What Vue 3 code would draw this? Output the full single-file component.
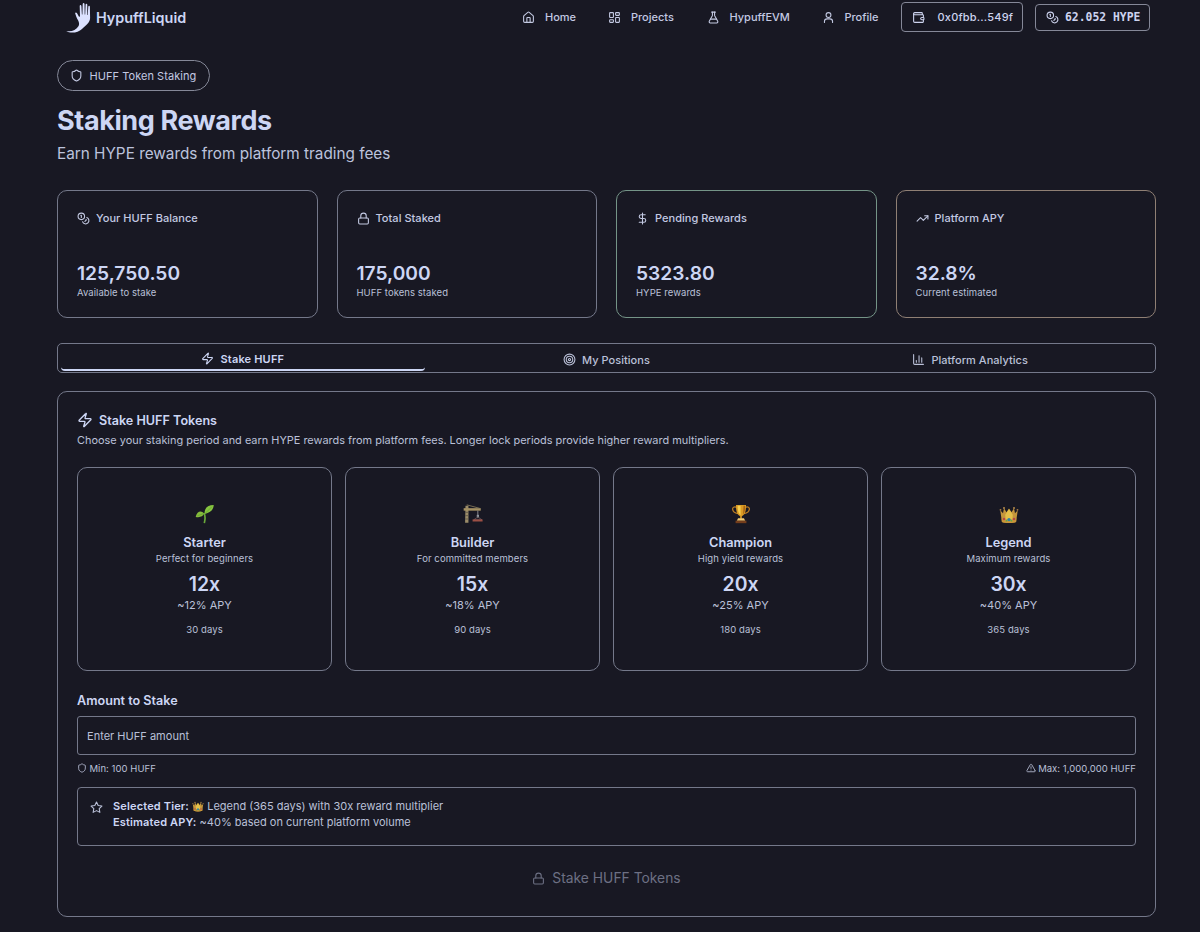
<script setup>
const icons = {
  home: '<path d="M15 21v-8a1 1 0 0 0-1-1h-4a1 1 0 0 0-1 1v8"/><path d="M3 10a2 2 0 0 1 .7-1.5l7-6a2 2 0 0 1 2.6 0l7 6A2 2 0 0 1 21 10v9a2 2 0 0 1-2 2H5a2 2 0 0 1-2-2z"/>',
  grid: '<rect width="7" height="9" x="3" y="3" rx="1"/><rect width="7" height="5" x="14" y="3" rx="1"/><rect width="7" height="9" x="14" y="12" rx="1"/><rect width="7" height="5" x="3" y="16" rx="1"/>',
  flask: '<path d="M14 2v6a2 2 0 0 0 .2.9l5.6 10.2A2 2 0 0 1 18 22H6a2 2 0 0 1-1.800-2.900L9.800 8.900A2 2 0 0 0 10 8V2"/><path d="M6.500 15h11"/><path d="M8.500 2h7"/>',
  user: '<circle cx="12" cy="7.500" r="4.500"/><path d="M4.500 21v-1.500a5 5 0 0 1 5-5h5a5 5 0 0 1 5 5V21"/>',
  wallet: '<path d="M19 7V4a1 1 0 0 0-1-1H5a2 2 0 0 0 0 4h15a1 1 0 0 1 1 1v4h-3a2 2 0 0 0 0 4h3a1 1 0 0 0 1-1v-2a1 1 0 0 0-1-1"/><path d="M3 5v14a2 2 0 0 0 2 2h15a1 1 0 0 0 1-1v-4"/>',
  coins: '<circle cx="8" cy="8" r="6"/><path d="M18.090 10.370A6 6 0 1 1 10.340 18"/><path d="M7 6h1v4"/><path d="m16.710 13.880.7.710-2.820 2.820"/>',
  lock: '<rect width="18" height="11" x="3" y="11" rx="2"/><path d="M7 11V7a5 5 0 0 1 10 0v4"/>',
  dollar: '<path d="M12 2v20"/><path d="M17 5H9.500a3.500 3.500 0 0 0 0 7h5a3.500 3.500 0 0 1 0 7H6"/>',
  trend: '<path d="M22 7 13.500 15.500 8.500 10.500 2 17"/><path d="M16 7h6v6"/>',
  zap: '<path d="M4 14a1 1 0 0 1-.78-1.630l9.900-10.200a.5.5 0 0 1 .860.460l-1.920 6.020A1 1 0 0 0 13 10h7a1 1 0 0 1 .780 1.630l-9.900 10.200a.5.5 0 0 1-.860-.460l1.920-6.020A1 1 0 0 0 11 14z"/>',
  target: '<circle cx="12" cy="12" r="10"/><circle cx="12" cy="12" r="6"/><circle cx="12" cy="12" r="2"/>',
  chart: '<path d="M3 3v16a2 2 0 0 0 2 2h16"/><path d="M18 17V9"/><path d="M13 17V5"/><path d="M8 17v-3"/>',
  shield: '<path d="M20 13c0 5-3.500 7.500-7.660 8.950a1 1 0 0 1-.670-.010C7.500 20.500 4 18 4 13V6a1 1 0 0 1 1-1c2 0 4.500-1.200 6.240-2.720a1.170 1.170 0 0 1 1.520 0C14.510 3.810 17 5 19 5a1 1 0 0 1 1 1z"/>',
  alert: '<path d="m21.730 18-8-14a2 2 0 0 0-3.480 0l-8 14A2 2 0 0 0 4 21h16a2 2 0 0 0 1.730-3"/><path d="M12 9v4"/><path d="M12 17h.010"/>',
  star: '<path d="m12 2 3.090 6.260L22 9.270l-5 4.870 1.180 6.880L12 17.770l-6.180 3.250L7 14.140 2 9.270l6.910-1.010z"/>',
}
const art = {
  seedling: '<path d="M11.200 23C12.400 18 12.300 14 10.900 10.800" fill="none" stroke="#69a83a" stroke-width="2"/><path d="M11.600 12C11 5 15 1.500 22.500 1.300 22 7.500 18 10.500 11.600 12z" fill="#86c440"/><path d="M12 11.500 20 3.500" stroke="#5c9a2c" stroke-width=".7"/><path d="M11 11.500C7.500 7.300 2.500 8.500.8 15.500 6 16.500 9.500 15 11 11.500z" fill="#86bd3c"/><path d="M10.500 11.500 3 14" stroke="#5c9a2c" stroke-width=".7"/>',
  crane: '<path d="M3 2h3.500v20.500H2.500z" fill="#9b8c69"/><path d="M2.500 6h4M2.500 10h4M2.500 14h4M2.500 18h4" stroke="#5d5647"/><path d="M.8 5h20.500v3H.8z" fill="#a59163"/><path d="M4.500 1 20 5.200" stroke="#897c5d" stroke-width="1"/><path d="M17.800 8v9" stroke="#9a9aa2" stroke-width="1"/><path d="M16.500 13h2.700v2.500h-2.700z" fill="#8e969d"/><path d="m17.800 15.500-5 3.500h10z" fill="none" stroke="#7a6668" stroke-width=".8"/><path d="M11.500 18.500h12V21h-12z" fill="#9c4f45"/>',
  trophy: '<path d="M7 4C0 1.500 0 10 8.500 11.500M17 4C24 1.500 24 10 15.500 11.500" fill="none" stroke="#bc7e25" stroke-width="1.500"/><path d="M6 1.200h12c.2 7-1.200 12-5 13.500v3h-2v-3C7.200 13.200 5.800 8.200 6 1.200z" fill="#d99a24"/><path d="M8 2h3.500v11.500C8.800 11.500 8 7.500 8 2z" fill="#f7cf50"/><path d="M15 2h2c0 5-.5 8.500-2.500 10.500z" fill="#a96516"/><path d="M8.500 17h7l1.500 3H7z" fill="#f1cb72"/><path d="M5.500 20h13v3h-13z" fill="#743d1c"/>',
  crown: '<path d="M1.500 7.500 4.800 11 6 5 9 10 12 5.500 15 10 18 5 19.200 11 22.500 7.500 20.500 21.500C16 23.300 8 23.300 3.500 21.500z" fill="#c4963c"/><path d="m7.500 13 4.500-7 4.500 7-.5 7.500H8z" fill="#e3c04a"/><path d="M3.200 17C8 19 16 19 20.800 17L20.500 21.500C16 23.300 8 23.300 3.500 21.500z" fill="#c99538"/><circle cx="1.800" cy="7" r="1.100" fill="#a87d45"/><circle cx="6" cy="4.800" r="1.200" fill="#b3894a"/><circle cx="18" cy="4.800" r="1.200" fill="#b3894a"/><circle cx="22.200" cy="7" r="1.100" fill="#a87d45"/><circle cx="12" cy="18.700" r="2" fill="#2f83a5"/><circle cx="6" cy="18" r="1.500" fill="#b44849"/><circle cx="18" cy="18" r="1.500" fill="#b44849"/><circle cx="9" cy="20" r="1" fill="#5ca94b"/><circle cx="15" cy="20" r="1" fill="#5ca94b"/>',
}
const nav = [
  { icon: 'home', label: 'Home', cls: 'n-home' },
  { icon: 'grid', label: 'Projects', cls: 'n-proj' },
  { icon: 'flask', label: 'HypuffEVM', cls: 'n-evm' },
  { icon: 'user', label: 'Profile', cls: 'n-prof' },
]
const stats = [
  { icon: 'coins', label: 'Your HUFF Balance', value: '125,750.50', note: 'Available to stake', tone: '' },
  { icon: 'lock', label: 'Total Staked', value: '175,000', note: 'HUFF tokens staked', tone: '' },
  { icon: 'dollar', label: 'Pending Rewards', value: '5323.80', note: 'HYPE rewards', tone: 'green' },
  { icon: 'trend', label: 'Platform APY', value: '32.8%', note: 'Current estimated', tone: 'amber' },
]
const tiers = [
  { art: 'seedling', name: 'Starter', text: 'Perfect for beginners', mult: '12x', apy: '~12% APY', days: '30 days' },
  { art: 'crane', name: 'Builder', text: 'For committed members', mult: '15x', apy: '~18% APY', days: '90 days' },
  { art: 'trophy', name: 'Champion', text: 'High yield rewards', mult: '20x', apy: '~25% APY', days: '180 days' },
  { art: 'crown', name: 'Legend', text: 'Maximum rewards', mult: '30x', apy: '~40% APY', days: '365 days' },
]
</script>

<template>
  <div class="page">
    <header class="top">
      <div class="brand">
        <svg class="hand" viewBox="0 0 26 32">
          <path d="M.3 30C5 31 10 29.500 12.600 25 14.200 21.500 11.500 19 10.400 16L9.200 12.500C9 11.300 10.200 11 10.900 12L13 15.800 14 15.600 13.700 5C13.700 3.700 15.300 3.700 15.400 5L15.900 13.500H16.400L16.700 2.900C16.800 1.700 18.400 1.700 18.500 2.900L18.700 13.500H19.200L19.600 3.600C19.700 2.400 21.300 2.500 21.300 3.700L21.200 14H21.700L22.300 5.600C22.500 4.500 23.900 4.600 23.900 5.800L24.100 17C24 22 19.500 24.500 16 28 12 32 4 32.700.3 30Z" />
        </svg>
        <span>HypuffLiquid</span>
      </div>
      <nav class="nav">
        <a v-for="n in nav" :key="n.label" :class="n.cls"><svg class="ic" viewBox="0 0 24 24" v-html="icons[n.icon]" /><span>{{ n.label }}</span></a>
      </nav>
      <div class="wallet"><svg class="ic" viewBox="0 0 24 24" v-html="icons.wallet" /><span>0x0fbb...549f</span></div>
      <div class="funds"><svg class="ic" viewBox="0 0 24 24" v-html="icons.coins" /><span>62.052 HYPE</span></div>
    </header>

    <main class="main">
      <div class="badge"><svg class="ic" viewBox="0 0 24 24" v-html="icons.shield" /><span>HUFF Token Staking</span></div>
      <h1>Staking Rewards</h1>
      <p class="lead">Earn HYPE rewards from platform trading fees</p>

      <section class="stats">
        <article v-for="s in stats" :key="s.label" class="stat" :class="s.tone">
          <div class="stat-head"><svg class="ic" viewBox="0 0 24 24" v-html="icons[s.icon]" /><span>{{ s.label }}</span></div>
          <div class="value">{{ s.value }}</div>
          <div class="note">{{ s.note }}</div>
        </article>
      </section>

      <div class="tabs">
        <div class="tab active"><svg class="ic" viewBox="0 0 24 24" v-html="icons.zap" /><span>Stake HUFF</span></div>
        <div class="tab"><svg class="ic" viewBox="0 0 24 24" v-html="icons.target" /><span>My Positions</span></div>
        <div class="tab"><svg class="ic" viewBox="0 0 24 24" v-html="icons.chart" /><span>Platform Analytics</span></div>
      </div>

      <section class="panel">
        <h2><svg class="ic" viewBox="0 0 24 24" v-html="icons.zap" /><span>Stake HUFF Tokens</span></h2>
        <p class="desc">Choose your staking period and earn HYPE rewards from platform fees. Longer lock periods provide higher reward multipliers.</p>

        <div class="tiers">
          <article v-for="t in tiers" :key="t.name" class="tier">
            <svg class="art" viewBox="0 0 24 24" v-html="art[t.art]" />
            <h3>{{ t.name }}</h3>
            <p class="t-text">{{ t.text }}</p>
            <div class="mult">{{ t.mult }}</div>
            <div class="apy">{{ t.apy }}</div>
            <div class="days">{{ t.days }}</div>
          </article>
        </div>

        <div class="label">Amount to Stake</div>
        <div class="field">Enter HUFF amount</div>
        <div class="limits">
          <span><svg class="ic" viewBox="0 0 24 24" v-html="icons.shield" />Min: 100 HUFF</span>
          <span><svg class="ic" viewBox="0 0 24 24" v-html="icons.alert" />Max: 1,000,000 HUFF</span>
        </div>

        <div class="info">
          <svg class="ic" viewBox="0 0 24 24" v-html="icons.star" />
          <div>
            <p><b>Selected Tier:</b> <svg class="mini" viewBox="0 0 24 24" v-html="art.crown" /> Legend (365 days) with 30x reward multiplier</p>
            <p><b>Estimated APY:</b> ~40% based on current platform volume</p>
          </div>
        </div>

        <div class="submit"><svg class="ic" viewBox="0 0 24 24" v-html="icons.lock" /><span>Stake HUFF Tokens</span></div>
      </section>
    </main>
  </div>
</template>

<style>
html, body { background: #181823; }
</style>

<style scoped>
* { box-sizing: border-box; }
.page { width: 1200px; height: 932px; overflow: hidden; background: #181823; color: #cdd6f4; font-family: Inter, "Liberation Sans", sans-serif; }
h1, h2, h3, p { margin: 0; }
.ic { width: 13px; height: 13px; flex: none; fill: none; stroke: currentColor; stroke-width: 2; stroke-linecap: round; stroke-linejoin: round; }
.top { display: flex; height: 34px; padding-left: 66px; align-items: center; }
.brand { display: flex; align-items: center; width: 456px; gap: 4px; font-weight: 600; font-size: 14.400px; }
.hand { width: 26px; height: 32px; margin-top: -1px; fill: #dce2ff; }
.nav { display: flex; width: 378.500px; color: #c3c9e2; font-size: 11px; font-weight: 500; }
.nav a { display: flex; align-items: center; gap: 10px; }
.n-home { width: 86px; } .n-proj { width: 98.500px; } .n-evm { width: 115px; }
.wallet, .funds { display: flex; align-items: center; border: 1px solid #858898; border-radius: 4px; color: #cdd3ee; }
.wallet { width: 122.500px; height: 30px; padding-left: 10px; gap: 13px; font-size: 11px; font-weight: 500; letter-spacing: .2px; }
.funds { width: 115px; height: 27px; margin-left: 12px; padding-left: 10px; gap: 6px; font: 700 11.400px "DejaVu Sans Mono", "Liberation Mono", monospace; }
.main { width: 1099px; margin: 26px 0 0 57px; }
.badge { display: flex; align-items: center; gap: 6.500px; width: 153px; height: 31px; padding-left: 12px; border: 1px solid #858898; border-radius: 16px; font-size: 11px; letter-spacing: .05px; color: #c3c9e2; }
h1 { margin-top: 13px; height: 34px; line-height: 34px; font-size: 27px; font-weight: 700; letter-spacing: -.4px; }
.lead { height: 24px; margin-top: 3px; line-height: 26px; font-size: 15.300px; color: #bcc3dd; }
.stats { display: grid; grid-template-columns: repeat(4, 1fr); gap: 19px; margin-top: 25px; }
.stat { height: 128px; padding: 18px 19px; border: 1px solid #74788a; border-radius: 10px; }
.green { border-color: #749487; } .amber { border-color: #8f7f74; }
.stat-head { display: flex; align-items: center; gap: 6px; height: 18px; font-size: 11px; font-weight: 500; letter-spacing: .03px; color: #c3c9e2; }
.value { margin-top: 33px; height: 26px; line-height: 26px; font-size: 19.200px; font-weight: 600; }
.note { height: 13px; line-height: 13px; font-size: 9.500px; letter-spacing: .06px; color: #bac0d8; }
.tabs { display: grid; grid-template-columns: repeat(3, 1fr); height: 30px; margin-top: 25px; padding: 2px 3px 1px; border: 1px solid #74788a; border-radius: 5px; }
.tab { display: flex; align-items: center; justify-content: center; gap: 6px; padding-top: 2px; font-size: 11px; font-weight: 500; letter-spacing: .03px; color: #bac0d8; border-radius: 4px; }
.active { letter-spacing: .18px; font-weight: 600; color: #cdd6f4; border-bottom: 2px solid #cdd6f4; }
.panel { height: 526px; margin-top: 18px; padding: 19px; border: 1px solid #74788a; border-radius: 10px; }
h2 { display: flex; align-items: center; gap: 6px; height: 17px; font-size: 12.600px; font-weight: 600; }
h2 .ic { width: 16px; height: 16px; }
h2 span { margin-top: 1px; }
.desc { height: 16px; margin-top: 4px; line-height: 17px; font-size: 10.930px; color: #bac0d8; }
.tiers { display: grid; grid-template-columns: repeat(4, 1fr); gap: 13px; margin-top: 19px; }
.tier { display: flex; flex-direction: column; align-items: center; height: 204px; padding-top: 36px; border: 1px solid #74788a; border-radius: 10px; }
.art { width: 20px; height: 20px; }
h3 { height: 18px; margin-top: 9px; line-height: 20px; font-size: 12.800px; font-weight: 600; }
.t-text { height: 14px; margin-top: 1px; line-height: 14px; font-size: 9.500px; letter-spacing: .1px; color: #bac0d8; }
.mult { height: 26px; margin-top: 5px; line-height: 27px; font-size: 19.400px; font-weight: 600; }
.apy { height: 16px; line-height: 16px; font-size: 11px; color: #bac0d8; }
.days { height: 14px; margin-top: 10px; line-height: 14px; font-size: 9.500px; letter-spacing: .1px; color: #bac0d8; }
.label { height: 18px; margin-top: 20px; line-height: 20px; font-size: 12.600px; font-weight: 600; }
.field { height: 39px; margin-top: 7px; padding-left: 9px; line-height: 38px; border: 1px solid #74788a; border-radius: 3px; font-size: 11px; letter-spacing: .02px; color: #bac0d8; }
.limits { display: flex; justify-content: space-between; height: 14px; margin-top: 6px; font-size: 9.500px; letter-spacing: .04px; color: #bac0d8; }
.limits span { display: flex; align-items: center; gap: 2.500px; }
.limits .ic { width: 10px; height: 10px; }
.info { display: flex; gap: 10px; height: 59px; margin-top: 12px; padding: 10px 12px; border: 1px solid #74788a; border-radius: 4px; font-size: 11px; line-height: 16px; color: #bac0d8; }
.info > .ic { margin-top: 3px; }
.info b { font-weight: 600; color: #cdd6f4; letter-spacing: .15px; }
.mini { width: 12px; height: 12px; vertical-align: -2px; }
.submit { display: flex; align-items: center; justify-content: center; gap: 7px; height: 24px; margin-top: 20px; font-size: 13.850px; color: #6d7084; }
</style>
